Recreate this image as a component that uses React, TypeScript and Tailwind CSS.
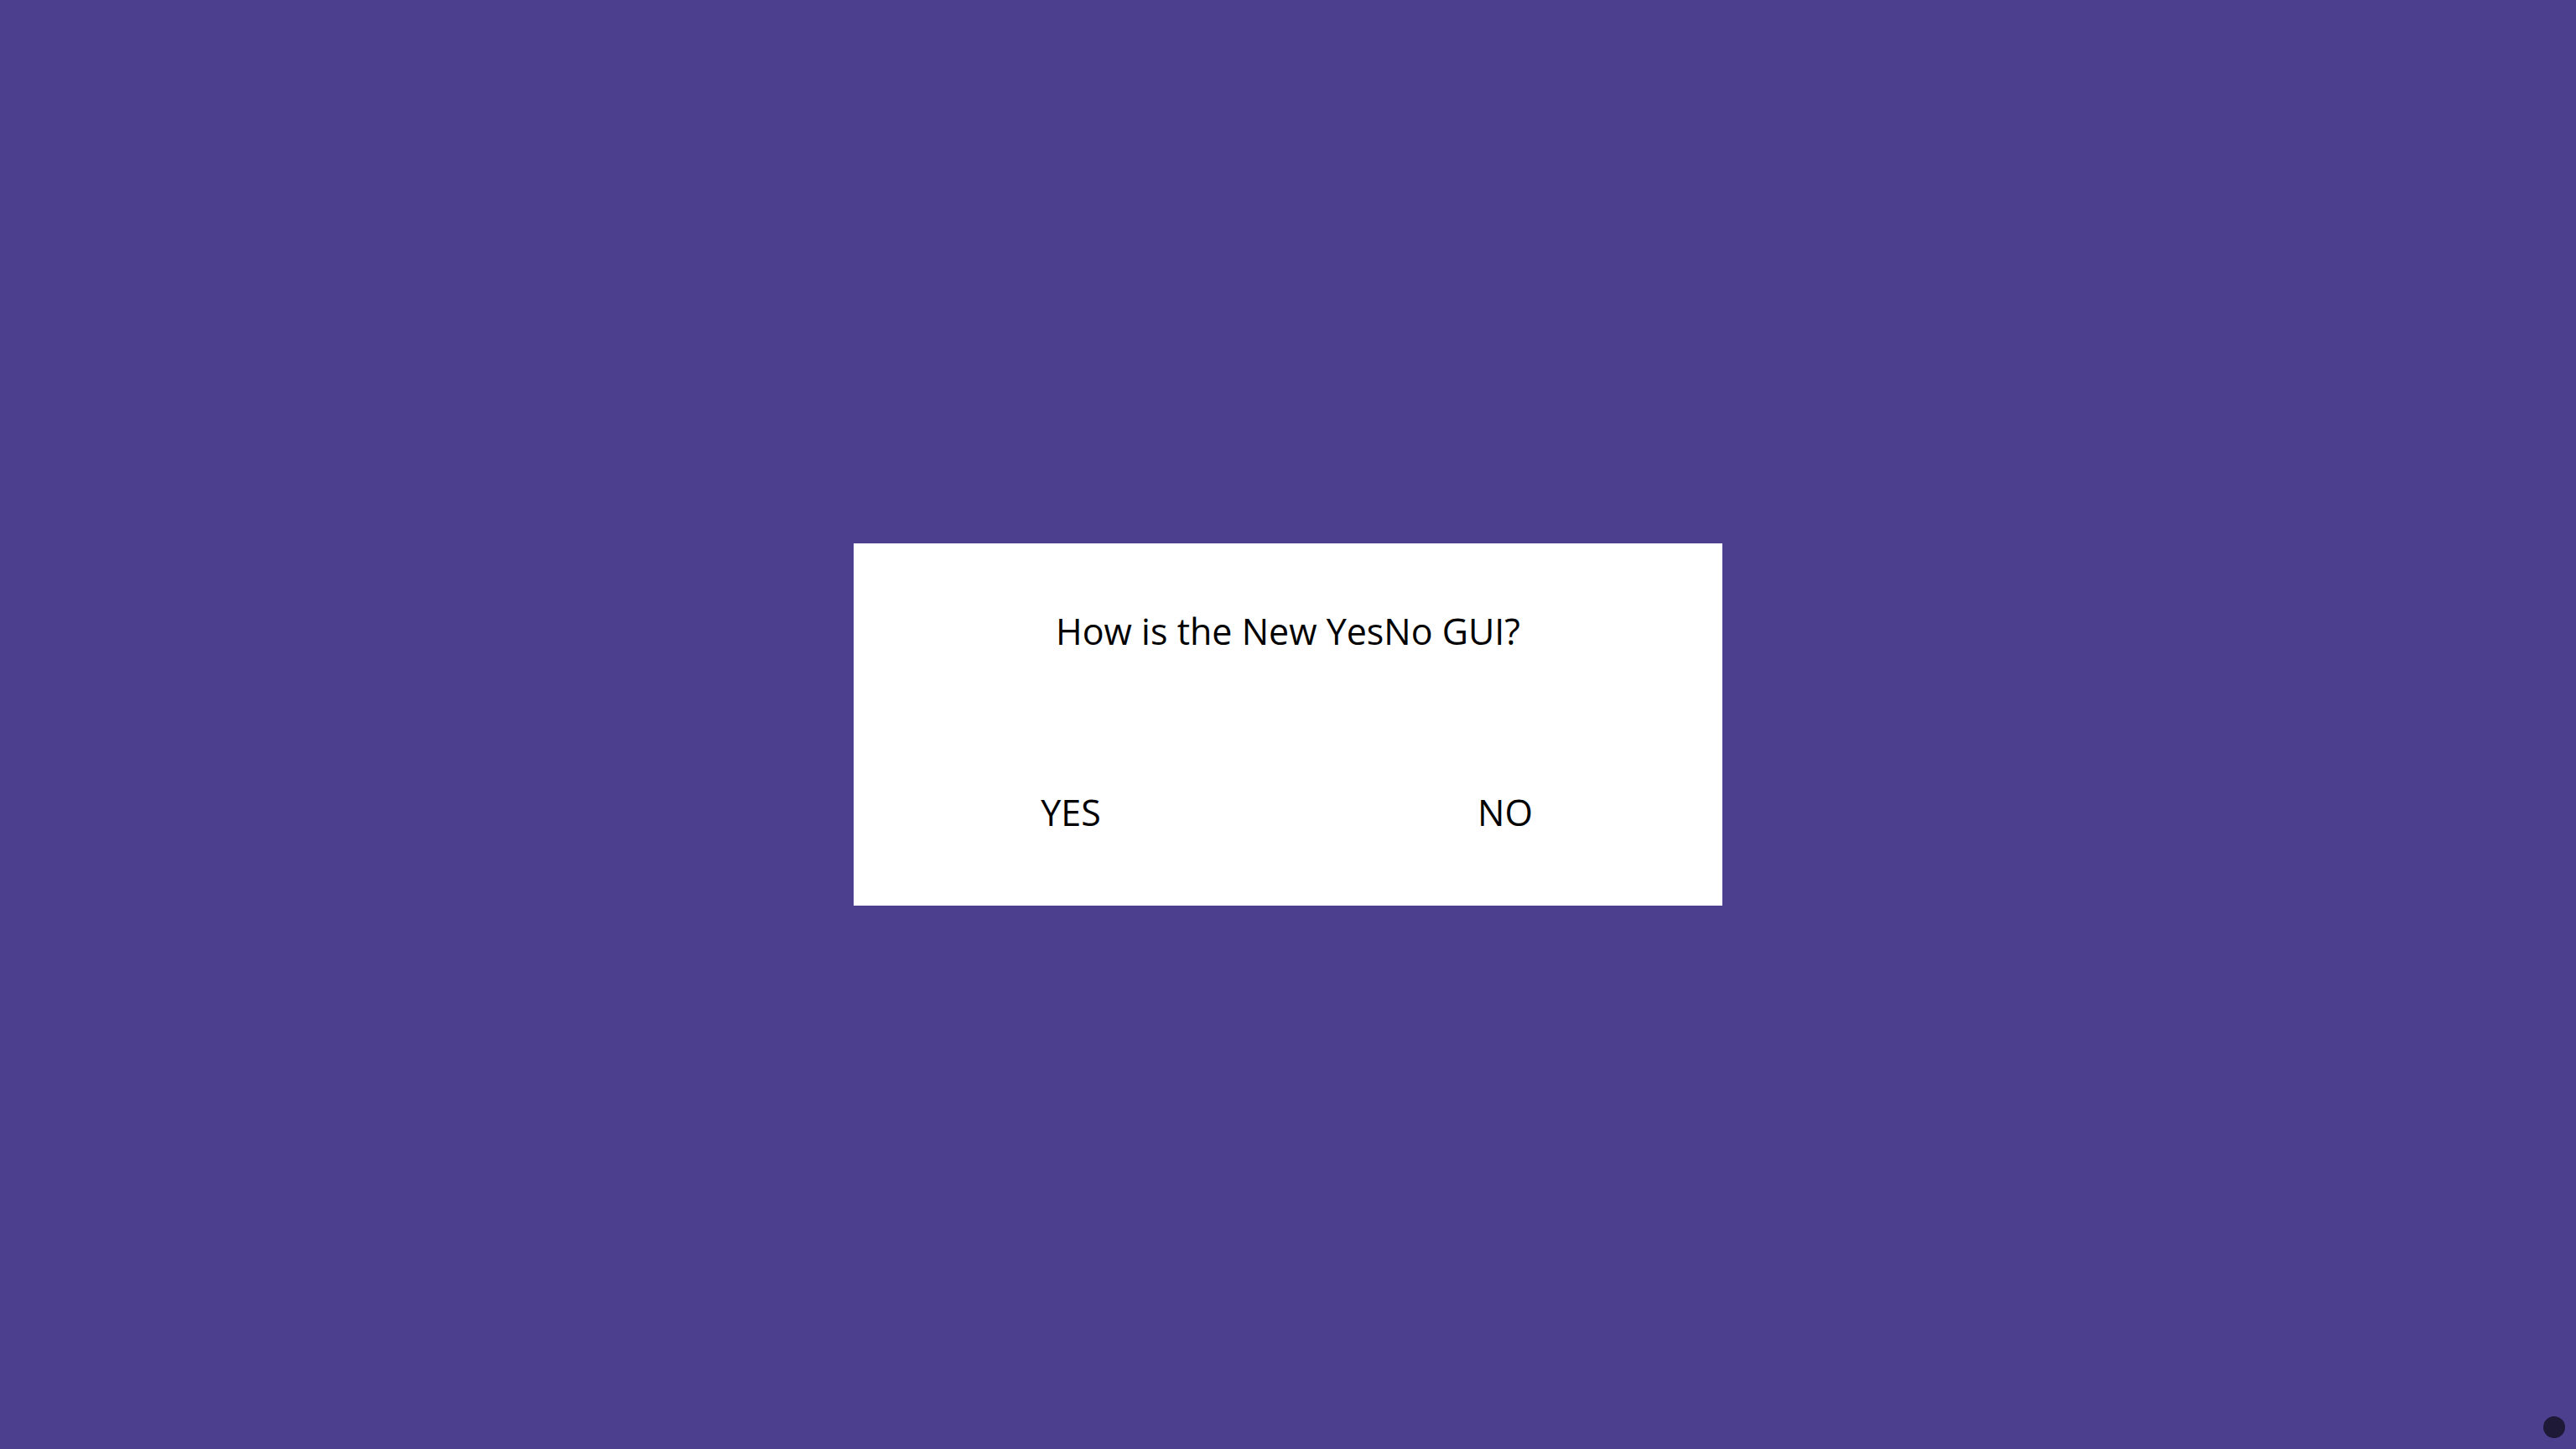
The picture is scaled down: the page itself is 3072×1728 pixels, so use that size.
const font = { fontFamily: '"Open Sans", "Noto Sans", sans-serif' };

const ChoiceButton = ({ label }: { label: string }) => (
    <button className="flex-1 text-center text-[43px] leading-[60px] text-black bg-transparent cursor-pointer">
        {label}
    </button>
);

const App = () => {
    return (
        <main
            className="relative w-full h-screen bg-[#4c3f8d] flex items-center justify-center"
            style={font}
        >
            <div className="w-[1036px] h-[432px] bg-white flex flex-col">
                <h1 className="pt-[75px] text-center text-[43px] leading-[60px] font-normal text-black">
                    How is the New YesNo GUI?
                </h1>

                <div className="mt-[156px] flex">
                    <ChoiceButton label="YES" />
                    <ChoiceButton label="NO" />
                </div>
            </div>

            <div className="absolute right-[13px] bottom-[13px] w-[26px] h-[26px] rounded-full bg-[#1d1937]"></div>
        </main>
    );
};

export default App;
